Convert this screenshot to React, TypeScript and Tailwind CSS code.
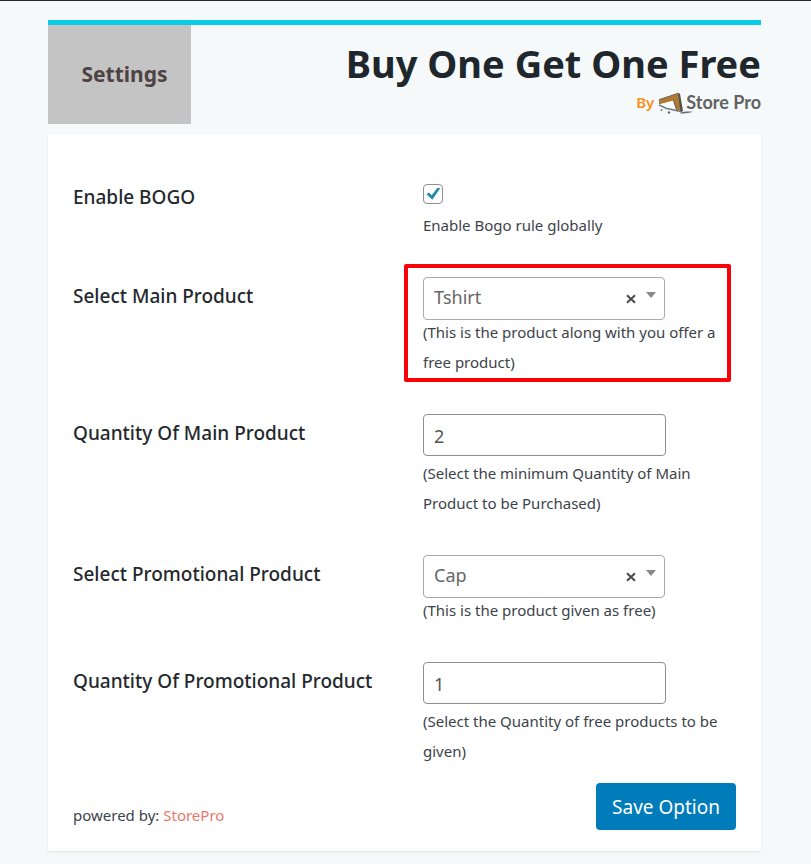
import { useId, useState } from "react";
import type { ReactNode } from "react";

function Field({ id, label, flush, boxed, children }: {
  id: string;
  label: string;
  flush?: boolean;
  boxed?: boolean;
  children: ReactNode;
}) {
  return (
    <div className="grid grid-cols-[350fr_313fr]">
      <label
        htmlFor={id}
        className={`text-[19px] leading-[26px] font-medium text-[#23282d] ${flush ? "" : "pt-1.5"}`}
      >
        {label}
      </label>
      <div className="relative">
        {boxed && (
          <div className="pointer-events-none absolute -top-[13px] right-[5px] -bottom-[5px] -left-[19px] rounded-xs border-4 border-[#fb0007]" />
        )}
        {children}
      </div>
    </div>
  );
}

function ProductSelect({ id, initial, options }: { id: string; initial: string; options: string[] }) {
  const [value, setValue] = useState(initial);
  return (
    <div className="relative w-[242px]">
      <select
        id={id}
        value={value}
        onChange={(e) => setValue(e.target.value)}
        className="block h-[43px] w-full appearance-none rounded-[4px] border border-[#aaaaaa] bg-white px-[10px] pb-0.5 text-[18px] text-[#666666]"
      >
        <option value=""></option>
        {options.map((o) => (
          <option key={o}>{o}</option>
        ))}
      </select>
      <button
        type="button"
        aria-label="Clear selection"
        onClick={() => setValue("")}
        className="absolute top-4 right-7 flex size-3 items-center justify-center text-[#4a4a4a]"
      >
        <svg viewBox="0 0 10 10" className="size-[10px]" fill="none" stroke="currentColor" strokeWidth="2">
          <path d="M1 1.2 9 8.8M9 1.2 1 8.8" />
        </svg>
      </button>
      <svg viewBox="0 0 10 6" className="pointer-events-none absolute top-[15px] right-[9px] h-1.5 w-2.5" fill="#888888">
        <path d="M0 0h10L5 6z" />
      </svg>
    </div>
  );
}

function QuantityInput({ id, initial }: { id: string; initial: string }) {
  return (
    <input
      id={id}
      type="text"
      inputMode="numeric"
      defaultValue={initial}
      className="block h-[42px] w-[243px] rounded-[4px] border border-[#8c8f94] bg-white px-[10px] pt-0.5 text-[18px] text-[#555555]"
    />
  );
}

function StoreProLogo() {
  return (
    <svg viewBox="0 0 36 24" className="absolute top-0 left-0 h-6 w-9" fill="none">
      <path d="M1 9.500 20.500 3 24 21.500 18.500 20 15.500 10.500 1 14.500z" fill="#b07a35" />
      <path d="M1 9.800 20.500 3.200" stroke="#7b6a55" strokeWidth="1.200" />
      <path d="M20 3l2 .8 3 17-2.500 2z" fill="#55524e" />
      <path d="M1.500 14.500 15.300 10.700 18.300 20 5 16.800z" fill="#fbfcfc" />
      <path d="M15.400 10.300 18.600 20" stroke="#66584a" strokeWidth="1" />
      <path d="M1 14.800 8 18.200 22.500 21.500" stroke="#6b7b84" strokeWidth="1.500" />
      <path d="M22 23.200c4 .6 8 .1 13-1.400-5-.4-9-.1-11 .3" fill="#6b6b6b" />
      <circle cx="3.500" cy="20" r="1" fill="#777" />
      <circle cx="11" cy="22.500" r="1.200" fill="#666" />
    </svg>
  );
}

export default function App() {
  const uid = useId();
  return (
    <div className="min-h-screen border-t border-[#23282d] bg-[#f5f9fa] pt-[19px] pr-[50px] pb-3 pl-12 font-['Noto_Sans','Open_Sans',sans-serif] text-[15px] text-[#3c434a]">
      <header className="flex h-[104px] items-stretch justify-between border-t-5 border-[#08cde4]">
        <a href="#settings" className="flex w-[143px] items-center justify-center bg-[#c4c4c4] pl-2.5 text-[21px] font-bold text-[#4e4343]">
          Settings
        </a>
        <div className="flex flex-col items-end gap-0.5 pt-[13px]">
          <h1 className="text-[38px] leading-[50px] font-bold text-[#20272c]">Buy One Get One Free</h1>
          <div className="flex h-6 items-center gap-1">
            <span className="text-[15px] font-semibold text-[#fb8f1d]">By</span>
            <a href="#storepro" className="relative flex h-6 items-center pl-7 font-['Lato',sans-serif] text-[18px] font-bold text-[#626262]">
              <StoreProLogo />
              <span className="relative">Store Pro</span>
            </a>
          </div>
        </div>
      </header>

      <form
        className="mt-2.5 bg-white px-[25px] pt-[50px] pb-[21px] shadow-[0_1px_2px_#dfe4e7]"
        onSubmit={(e) => e.preventDefault()}
      >
        <div className="flex flex-col gap-[37px]">
          <Field id={`${uid}-enable`} label="Enable BOGO" flush>
            <div className="relative size-5">
              <input
                id={`${uid}-enable`}
                type="checkbox"
                defaultChecked
                className="peer block size-5 appearance-none rounded-[4px] border border-[#8c8f94] bg-white"
              />
              <svg viewBox="0 0 20 20" className="pointer-events-none absolute inset-0 hidden size-5 peer-checked:block" fill="#2585ad">
                <path d="M17.200 4.200 9.300 15.800 3.600 10.300l2-1.900L8.800 11.300 14.500 3.800z" />
              </svg>
            </div>
            <p className="mt-1.5 leading-[30px]">Enable Bogo rule globally</p>
          </Field>

          <Field id={`${uid}-main`} label="Select Main Product" boxed>
            <ProductSelect id={`${uid}-main`} initial="Tshirt" options={["Tshirt", "Cap"]} />
            <p className="-mt-[3px] leading-[30px]">(This is the product along with you offer a free product)</p>
          </Field>

          <Field id={`${uid}-mainqty`} label="Quantity Of Main Product">
            <QuantityInput id={`${uid}-mainqty`} initial="2" />
            <p className="mt-0.5 leading-[30px]">(Select the minimum Quantity of Main Product to be Purchased)</p>
          </Field>

          <Field id={`${uid}-promo`} label="Select Promotional Product">
            <ProductSelect id={`${uid}-promo`} initial="Cap" options={["Tshirt", "Cap"]} />
            <p className="-mt-[3px] leading-[30px]">(This is the product given as free)</p>
          </Field>

          <Field id={`${uid}-promoqty`} label="Quantity Of Promotional Product">
            <QuantityInput id={`${uid}-promoqty`} initial="1" />
            <p className="mt-0.5 leading-[30px]">(Select the Quantity of free products to be given)</p>
          </Field>
        </div>

        <div className="mt-[17px] flex items-end justify-between">
          <p className="leading-[30px]">
            powered by: <a href="#storepro" className="text-[#e8786b]">StorePro</a>
          </p>
          <button type="submit" className="h-[47px] rounded-[4px] bg-[#007cba] px-4 pt-0.5 text-[19px] text-white">
            Save Option
          </button>
        </div>
      </form>
    </div>
  );
}
